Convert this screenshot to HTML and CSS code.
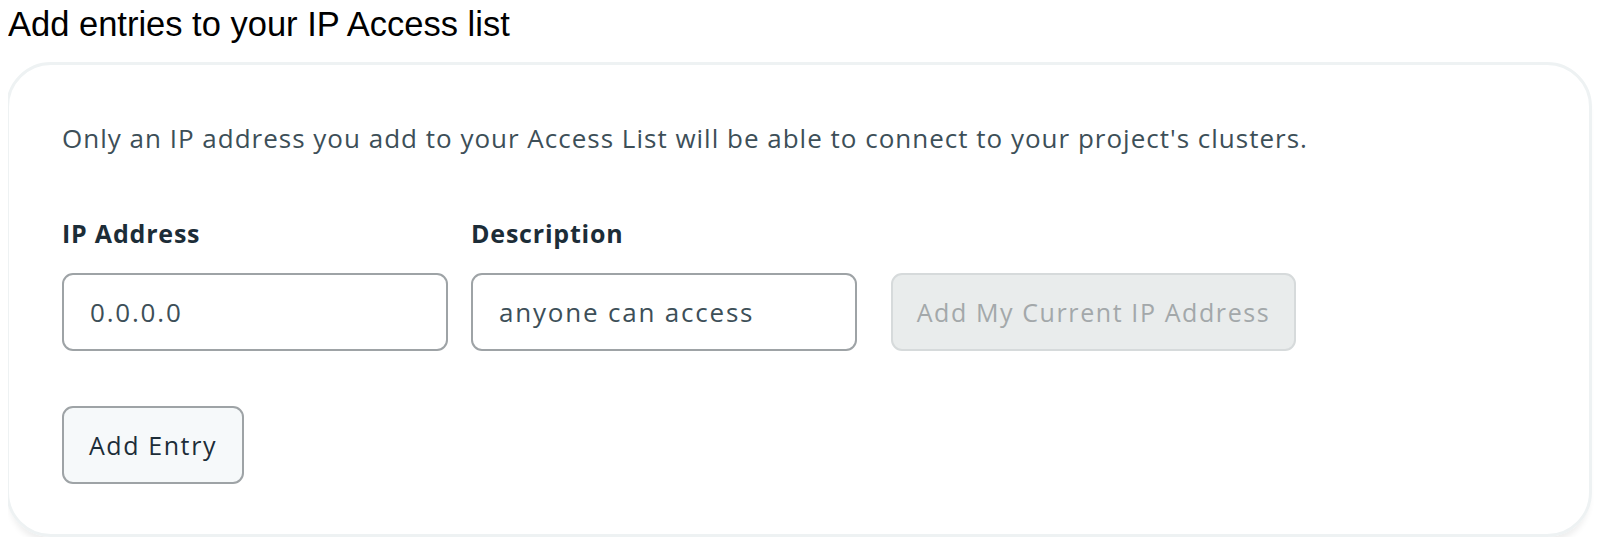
FILE: index.html
```html
<!DOCTYPE html>
<html>
<head>
<meta charset="utf-8">
<link rel="stylesheet" href="styles.css">
</head>
<body>
<h1 class="title">Add entries to your IP Access list</h1>
<div class="card">
  <p class="intro">Only an IP address you add to your Access List will be able to connect to your project's clusters.</p>
  <div class="fields">
    <div class="field">
      <label class="label">IP Address</label>
      <div class="input">0.0.0.0</div>
    </div>
    <div class="field">
      <label class="label">Description</label>
      <div class="input">anyone can access</div>
    </div>
    <div class="field field-btn">
      <button class="btn btn-disabled">Add My Current IP Address</button>
    </div>
  </div>
  <div class="actions">
    <button class="btn btn-entry">Add Entry</button>
  </div>
</div>
</body>
</html>
```
FILE: styles.css
```css
html, body {
  background: #ffffff;
}
body {
  margin: 8px;
}
.title {
  margin: 0;
  font-family: "Liberation Sans", Arial, sans-serif;
  font-weight: normal;
  font-size: 34.5px;
  line-height: 32px;
  color: #000;
}
.card {
  margin: 22px 10px 0 -2px;
  border: 3px solid #eef2f3;
  border-radius: 45px;
  padding: 57px 53px 50px 53px;
  box-shadow: 0 8px 6px -3px rgba(0, 0, 0, 0.07);
  font-family: "Open Sans", Lato, sans-serif;
  color: #3d4f58;
}
.intro {
  margin: 0;
  font-size: 26px;
  line-height: 32px;
  letter-spacing: 1px;
  color: #3d4f58;
}
.fields {
  display: flex;
  align-items: flex-end;
  gap: 23px;
  margin-top: 63px;
}
.field {
  display: flex;
  flex-direction: column;
  gap: 24px;
}
.field-btn {
  margin-left: 11px;
}
.label {
  font-size: 25px;
  line-height: 32px;
  font-weight: bold;
  color: #1c2d38;
  letter-spacing: 0.8px;
}
.input {
  box-sizing: border-box;
  width: 386px;
  height: 78px;
  border: 2px solid #9ea3a6;
  border-radius: 11px;
  padding: 0 26px;
  display: flex;
  align-items: center;
  font-size: 26px;
  letter-spacing: 1.8px;
  color: #3d4f58;
}
.btn {
  box-sizing: border-box;
  height: 78px;
  border-radius: 11px;
  font-family: "Open Sans", Lato, sans-serif;
  letter-spacing: 1.6px;
  font-size: 25px;
  display: flex;
  align-items: center;
  justify-content: center;
}
.btn-disabled {
  width: 405px;
  background: #e9ecec;
  border: 2px solid #d6dadb;
  color: #a3a8aa;
}
.actions {
  margin-top: 55px;
  display: flex;
}
.btn-entry {
  width: 182px;
  background: #f6f9fa;
  border: 2px solid #9ea3a6;
  color: #1c2d38;
}
```
